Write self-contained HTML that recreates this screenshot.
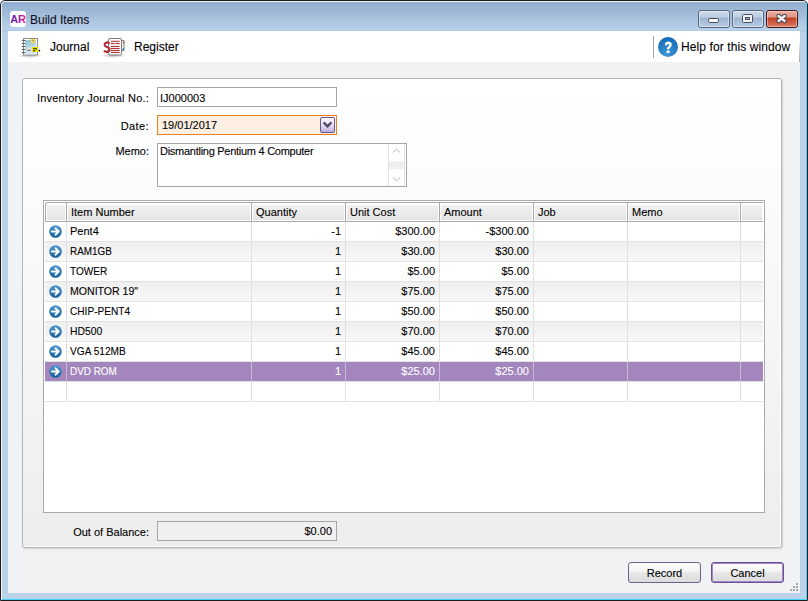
<!DOCTYPE html>
<html><head><meta charset="utf-8">
<style>
*{box-sizing:border-box;margin:0;padding:0}
html,body{width:808px;height:601px;overflow:hidden;background:#fff}
body{position:relative;font-family:"Liberation Sans",sans-serif;font-size:11px;color:#000;-webkit-text-stroke-width:0.1px}
.a{position:absolute}
#win{left:0;top:0;width:808px;height:601px;border:1px solid #1c1c1c;border-radius:5px 5px 0 0;
 background:linear-gradient(#92afd0 1px,#a0bad8 12px,#b9d1ea 29px,#a9c3df 30px,#bad2ea 31px,#bad2ea 100%);overflow:hidden}
#winin{left:0;top:0;width:806px;height:599px;border:1px solid rgba(255,255,255,.85);border-radius:4px 4px 0 0;border-bottom-color:#42d4fa;border-right-color:#42d4fa}
#title{left:30px;top:13px;font-size:12px;color:#101020}
#appic{left:10px;top:11px;width:17px;height:17px;background:#fff;border-radius:3px;font-weight:bold;font-size:11px;line-height:17px;text-align:center;letter-spacing:-0.5px}
#toolbar{left:8px;top:31px;width:792px;height:31px;background:#fff}
#content{left:8px;top:62px;width:792px;height:531px;background:#f1f2f4}
.tb{font-size:12px;top:40px}
#panel{left:22px;top:78px;width:760px;height:470px;border:1px solid #b4b4b4;border-radius:3px;
 background:linear-gradient(#fff 0,#fbfbfb 120px,#ededed 100%);box-shadow:inset -1px -1px 0 #fff,1px 1px 2px rgba(0,0,0,.13)}
.lbl{font-size:11px}
.inp{border:1px solid #a5a5a5;background:#fff}
.wbtn{top:10px;height:18px;border:1px solid #5a6f8e;border-radius:3px;
 background:linear-gradient(#cfdcec 0,#bccde3 45%,#9fb5d2 50%,#b4c8e2 100%);box-shadow:inset 0 0 0 1px rgba(255,255,255,.45)}
#grid{left:43px;top:200px;width:722px;height:313px;border:1px solid #aaaaaa;background:#fff}
.hd{position:absolute;top:202px;height:19px;border-top:1px solid #b8b8b8;border-bottom:2px solid #a8a8a8;
 background:linear-gradient(#fdfdfd 0,#f0f0f0 60%,#e3e3e3 100%);font-size:11px;padding:3px 0 0 4px}
.hsep{position:absolute;top:202px;height:19px;width:2px;border-left:1px solid #a8a8a8;background:#fff}
.hc{position:absolute;top:205px;height:15px;background:linear-gradient(#f1f1f1,#e4e4e4)}
.row{position:absolute;left:44px;width:719px;height:20px;border-bottom:1px solid #e4e4e4}
.alt{background:linear-gradient(#f3f3f3,#ededed)}
.vsep{position:absolute;top:221px;height:180px;width:1px;background:#e0e0e0}
.c{position:absolute;font-size:11px;white-space:nowrap}
.r{text-align:right}
.btn{top:562px;height:21px;width:73px;border:1px solid #6f5f8c;border-radius:3px;
 background:linear-gradient(#fdfdfd 0,#f3f3f3 45%,#e6e6e6 55%,#dcdcdc 100%);font-size:11px;text-align:center;line-height:21px}
</style></head><body>
<svg width="0" height="0" style="position:absolute"><defs>
<linearGradient id="ag" x1="0" y1="0" x2="0" y2="1"><stop offset="0" stop-color="#4d9ad2"/><stop offset="1" stop-color="#135c9a"/></linearGradient>
<symbol id="arw" viewBox="0 0 13 13"><circle cx="6.5" cy="6.5" r="6.3" fill="url(#ag)"/><path d="M2.8 6.5H9.6M6.5 3.3L9.8 6.5L6.5 9.7" stroke="#fff" stroke-width="1.9" fill="none" stroke-linecap="round" stroke-linejoin="round"/></symbol>
</defs></svg>
<div id="win" class="a"><div id="winin" class="a"></div></div>
<svg class="a" style="left:10px;top:11px" width="16" height="16" viewBox="0 0 16 16"><defs><linearGradient id="arg" x1="0" y1="0" x2="1" y2="0"><stop offset="0" stop-color="#5a18b4"/><stop offset="0.5" stop-color="#8a1cb0"/><stop offset="1" stop-color="#e8207a"/></linearGradient></defs><rect width="16" height="16" rx="3" fill="#fff"/><text x="8" y="12.2" text-anchor="middle" font-family="Liberation Sans" font-weight="bold" font-size="11" letter-spacing="-0.3" fill="url(#arg)">AR</text></svg>
<div id="title" class="a">Build Items</div>
<svg class="a" style="left:696px;top:8px" width="104" height="22" viewBox="0 0 104 22">
<defs>
<linearGradient id="bg1" x1="0" y1="0" x2="0" y2="1"><stop offset="0" stop-color="#cddbec"/><stop offset="0.4" stop-color="#bccde2"/><stop offset="0.43" stop-color="#9db4d0"/><stop offset="1" stop-color="#b9cde6"/></linearGradient>
<linearGradient id="bg2" x1="0" y1="0" x2="0" y2="1"><stop offset="0" stop-color="#eeb0a0"/><stop offset="0.4" stop-color="#dd9482"/><stop offset="0.43" stop-color="#bf3e22"/><stop offset="1" stop-color="#dc8068"/></linearGradient>
</defs>
<rect x="2.5" y="2.5" width="31" height="17" rx="2.5" fill="url(#bg1)" stroke="#56657c"/>
<rect x="3.5" y="3.5" width="29" height="15" rx="1.5" fill="none" stroke="#fff" stroke-opacity=".45"/>
<rect x="36.5" y="2.5" width="31" height="17" rx="2.5" fill="url(#bg1)" stroke="#56657c"/>
<rect x="37.5" y="3.5" width="29" height="15" rx="1.5" fill="none" stroke="#fff" stroke-opacity=".45"/>
<rect x="70.5" y="2.5" width="31" height="17" rx="2.5" fill="url(#bg2)" stroke="#4a1418"/>
<rect x="71.5" y="3.5" width="29" height="15" rx="1.5" fill="none" stroke="#fff" stroke-opacity=".4"/>
<rect x="12.5" y="10.5" width="10" height="4" rx="1.2" fill="#f4f4f4" stroke="#464e5c"/>
<rect x="46.5" y="6.5" width="10" height="8" rx="1.2" fill="#f4f4f4" stroke="#464e5c"/>
<rect x="49.5" y="9.5" width="4" height="2" fill="#a9bfd8" stroke="#464e5c"/>
<path d="M82.6 8L88.6 13M88.6 8L82.6 13" stroke="#3d4450" stroke-width="4.4" stroke-linecap="round"/>
<path d="M82.6 8L88.6 13M88.6 8L82.6 13" stroke="#f6f6f6" stroke-width="2.4" stroke-linecap="round"/>
</svg>
<div id="toolbar" class="a"></div>
<div id="content" class="a"></div>
<div class="a" style="left:799px;top:40px;width:1px;height:22px;background:linear-gradient(rgba(150,150,150,0),rgba(150,150,150,.9))"></div>

<svg class="a" style="left:15px;top:32px" width="30" height="28" viewBox="0 0 30 28">
<defs><radialGradient id="shd" cx="0.5" cy="0.5" r="0.5"><stop offset="0" stop-color="#000" stop-opacity=".28"/><stop offset="1" stop-color="#000" stop-opacity="0"/></radialGradient>
<linearGradient id="jb" x1="0" y1="0" x2="0.3" y2="1"><stop offset="0" stop-color="#8fc0d4"/><stop offset="1" stop-color="#d4ecf2"/></linearGradient></defs>
<ellipse cx="15" cy="23.5" rx="13" ry="2.6" fill="url(#shd)"/>
<rect x="8.5" y="6.5" width="14" height="16.5" fill="#fff" stroke="#8c8c8c"/>
<rect x="10" y="8" width="11" height="14" fill="url(#jb)"/>
<path d="M6.8 8.5h3.4M6.8 11.5h3.4M6.8 14.5h3.4M6.8 17.5h3.4M6.8 20.5h3.4" stroke="#5a5a5a" stroke-width="1.2"/>
<rect x="16" y="7" width="4" height="4" fill="#f2d83a"/>
<rect x="17" y="8" width="2" height="1.2" fill="#b8a860"/>
<rect x="12.5" y="15.5" width="5" height="4" fill="#e4e4e4"/>
<rect x="12.5" y="17.8" width="3" height="1" fill="#555"/>
<rect x="17" y="15" width="6" height="5" fill="#f4ea00"/>
<rect x="18" y="16.2" width="4" height="1.2" fill="#333"/>
<rect x="18" y="18.2" width="2.2" height="1.2" fill="#333"/>
<rect x="23" y="15.5" width="2" height="4" fill="#eeeeee"/>
<circle cx="24.3" cy="18.6" r="0.9" fill="#111"/>
</svg>
<svg class="a" style="left:98px;top:32px" width="32" height="28" viewBox="0 0 32 28">
<ellipse cx="15.5" cy="23.5" rx="13" ry="2.6" fill="url(#shd)"/>
<path d="M23.5 8.5h2.5v10h-2.5" fill="#fff" stroke="#7a7a7a"/>
<rect x="10.5" y="6.5" width="13" height="16.5" rx="1.5" fill="#fff" stroke="#7a7a7a"/>
<rect x="12" y="8.5" width="10" height="13" fill="#ececec"/>
<circle cx="25.6" cy="10.5" r="0.8" fill="#d02020"/>
<circle cx="25" cy="14" r="0.8" fill="#9fd08a"/>
<circle cx="25.3" cy="17" r="0.9" fill="#2080e0"/>
<path d="M13 9.3h8.5M13 11.5h3.5M17.5 11.5h4M13 14.5h8.5M13 16.5h8.5M13 18.5h8.5M13 20.5h8.5" stroke="#b33038" stroke-width="1"/>
<path d="M11.6 11.6C10.6 10.4 6.6 10.2 6.6 12.9C6.6 15.4 11.6 14.6 11.6 17.4C11.6 20.2 7.2 20.2 6 18.6M9 9.2v2M9 19.4v1.6" stroke="#b52e36" stroke-width="2.1" fill="none"/>
</svg>
<div class="a tb" style="left:50px">Journal</div>
<div class="a tb" style="left:134px">Register</div>
<div class="a" style="left:653px;top:36px;width:1px;height:22px;background:#a4a4a4"></div>
<svg class="a" style="left:658px;top:37px" width="20" height="20" viewBox="0 0 20 20"><defs><radialGradient id="hg" cx="0.45" cy="0.85" r="0.9"><stop offset="0" stop-color="#4399d4"/><stop offset="1" stop-color="#0c66b4"/></radialGradient></defs><circle cx="10" cy="10" r="10" fill="url(#hg)"/><path d="M8 8.2C8 5.1 12.6 5 12.6 7.8C12.6 9.8 10.1 10 10.1 12.3" stroke="#fff" stroke-width="2.4" fill="none"/><rect x="8.6" y="13.6" width="3" height="2.5" rx="0.6" fill="#fff"/></svg>
<div class="a tb" style="left:681px;letter-spacing:0.1px">Help for this window</div>

<div id="panel" class="a"></div>
<div class="a lbl r" style="left:0;width:149px;top:92px;letter-spacing:0.2px">Inventory Journal No.:</div>
<div class="a inp" style="left:157px;top:87px;width:180px;height:20px"></div>
<div class="a lbl" style="left:160px;top:92px">IJ000003</div>
<div class="a lbl r" style="left:0;width:149px;top:120px;letter-spacing:0.4px">Date:</div>
<div class="a inp" style="left:157px;top:115px;width:180px;height:20px;border-color:#e8821e;background:#fdefe2"></div>
<div class="a lbl" style="left:162px;top:119px">19/01/2017</div>
<div class="a" style="left:320px;top:117px;width:15px;height:16px;border:1px solid #6a5690;border-radius:2px;background:linear-gradient(#fcfbff 0,#e4def0 50%,#bfb1da 100%)"></div>
<svg class="a" style="left:320px;top:117px" width="15" height="16"><path d="M3.6 5.4L7.5 9.3L11.4 5.4" stroke="#54446e" stroke-width="2.3" fill="none"/></svg>
<div class="a lbl r" style="left:0;width:149px;top:145px">Memo:</div>
<div class="a inp" style="left:157px;top:143px;width:250px;height:44px"></div>
<svg class="a" style="left:388px;top:144px" width="18" height="42"><path d="M0.5 0V42M16.5 0V42" stroke="#dfe2e7" stroke-width="1"/><rect x="1" y="17" width="15" height="8" fill="#eeeff1"/><path d="M5 8.5L8.5 5L12 8.5M5 33.5L8.5 37L12 33.5" stroke="#cfd3d9" stroke-width="1.1" fill="none"/></svg>
<div class="a lbl" style="left:160px;top:145px;letter-spacing:-0.27px">Dismantling Pentium 4 Computer</div>

<div id="grid" class="a"></div>
<!--TABLE-->
<div class="a" style="left:45px;top:202px;width:718px;height:20px;border:1px solid #a9a9a9;border-right:none;border-radius:3px 0 0 0;background:#fff"></div>
<div class="a hc" style="left:47px;width:18px"></div>
<div class="a hc" style="left:68px;width:182px"></div>
<div class="a c" style="left:71px;top:206px">Item Number</div>
<div class="a hc" style="left:253px;width:91px"></div>
<div class="a c" style="left:256px;top:206px">Quantity</div>
<div class="a hc" style="left:347px;width:91px"></div>
<div class="a c" style="left:350px;top:206px">Unit Cost</div>
<div class="a hc" style="left:441px;width:91px"></div>
<div class="a c" style="left:444px;top:206px">Amount</div>
<div class="a hc" style="left:535px;width:91px"></div>
<div class="a c" style="left:538px;top:206px">Job</div>
<div class="a hc" style="left:629px;width:110px"></div>
<div class="a c" style="left:632px;top:206px">Memo</div>
<div class="a hc" style="left:742px;width:20px"></div>
<div class="a" style="left:66px;top:203px;width:1px;height:18px;background:#a9a9a9"></div>
<div class="a" style="left:251px;top:203px;width:1px;height:18px;background:#a9a9a9"></div>
<div class="a" style="left:345px;top:203px;width:1px;height:18px;background:#a9a9a9"></div>
<div class="a" style="left:439px;top:203px;width:1px;height:18px;background:#a9a9a9"></div>
<div class="a" style="left:533px;top:203px;width:1px;height:18px;background:#a9a9a9"></div>
<div class="a" style="left:627px;top:203px;width:1px;height:18px;background:#a9a9a9"></div>
<div class="a" style="left:740px;top:203px;width:1px;height:18px;background:#a9a9a9"></div>
<div class="a" style="left:45px;top:222px;width:718px;height:19px;"></div>
<div class="a" style="left:45px;top:241px;width:718px;height:1px;background:#e2e2e2"></div>
<div class="a" style="left:45px;top:242px;width:718px;height:19px;background:linear-gradient(#efefef,#f8f8f8);"></div>
<div class="a" style="left:45px;top:261px;width:718px;height:1px;background:#e2e2e2"></div>
<div class="a" style="left:45px;top:262px;width:718px;height:19px;"></div>
<div class="a" style="left:45px;top:281px;width:718px;height:1px;background:#e2e2e2"></div>
<div class="a" style="left:45px;top:282px;width:718px;height:19px;background:linear-gradient(#efefef,#f8f8f8);"></div>
<div class="a" style="left:45px;top:301px;width:718px;height:1px;background:#e2e2e2"></div>
<div class="a" style="left:45px;top:302px;width:718px;height:19px;"></div>
<div class="a" style="left:45px;top:321px;width:718px;height:1px;background:#e2e2e2"></div>
<div class="a" style="left:45px;top:322px;width:718px;height:19px;background:linear-gradient(#efefef,#f8f8f8);"></div>
<div class="a" style="left:45px;top:341px;width:718px;height:1px;background:#e2e2e2"></div>
<div class="a" style="left:45px;top:342px;width:718px;height:19px;"></div>
<div class="a" style="left:45px;top:361px;width:718px;height:1px;background:#e2e2e2"></div>
<div class="a" style="left:45px;top:362px;width:718px;height:19px;background:#a386be;"></div>
<div class="a" style="left:45px;top:381px;width:718px;height:1px;background:#e2e2e2"></div>
<div class="a" style="left:45px;top:382px;width:718px;height:19px;"></div>
<div class="a" style="left:45px;top:401px;width:718px;height:1px;background:#e2e2e2"></div>
<div class="a" style="left:66px;top:222px;width:1px;height:180px;background:#e0e0e0"></div>
<div class="a" style="left:251px;top:222px;width:1px;height:180px;background:#e0e0e0"></div>
<div class="a" style="left:345px;top:222px;width:1px;height:180px;background:#e0e0e0"></div>
<div class="a" style="left:439px;top:222px;width:1px;height:180px;background:#e0e0e0"></div>
<div class="a" style="left:533px;top:222px;width:1px;height:180px;background:#e0e0e0"></div>
<div class="a" style="left:627px;top:222px;width:1px;height:180px;background:#e0e0e0"></div>
<div class="a" style="left:740px;top:222px;width:1px;height:180px;background:#e0e0e0"></div>
<div class="a" style="left:66px;top:362px;width:1px;height:19px;background:#c8b8d8"></div>
<div class="a" style="left:251px;top:362px;width:1px;height:19px;background:#c8b8d8"></div>
<div class="a" style="left:345px;top:362px;width:1px;height:19px;background:#c8b8d8"></div>
<div class="a" style="left:439px;top:362px;width:1px;height:19px;background:#c8b8d8"></div>
<div class="a" style="left:533px;top:362px;width:1px;height:19px;background:#c8b8d8"></div>
<div class="a" style="left:627px;top:362px;width:1px;height:19px;background:#c8b8d8"></div>
<div class="a" style="left:740px;top:362px;width:1px;height:19px;background:#c8b8d8"></div>
<svg class="a" style="left:49px;top:225px" width="13" height="13"><use href="#arw"/></svg>
<div class="a c" style="left:70px;top:225px;">Pent4</div>
<div class="a c r" style="left:252px;width:89px;top:225px;">-1</div>
<div class="a c r" style="left:346px;width:89px;top:225px;">$300.00</div>
<div class="a c r" style="left:440px;width:89px;top:225px;">-$300.00</div>
<svg class="a" style="left:49px;top:245px" width="13" height="13"><use href="#arw"/></svg>
<div class="a c" style="left:70px;top:245px;transform:scaleX(0.9);transform-origin:0 0;">RAM1GB</div>
<div class="a c r" style="left:252px;width:89px;top:245px;">1</div>
<div class="a c r" style="left:346px;width:89px;top:245px;">$30.00</div>
<div class="a c r" style="left:440px;width:89px;top:245px;">$30.00</div>
<svg class="a" style="left:49px;top:265px" width="13" height="13"><use href="#arw"/></svg>
<div class="a c" style="left:70px;top:265px;transform:scaleX(0.915);transform-origin:0 0;">TOWER</div>
<div class="a c r" style="left:252px;width:89px;top:265px;">1</div>
<div class="a c r" style="left:346px;width:89px;top:265px;">$5.00</div>
<div class="a c r" style="left:440px;width:89px;top:265px;">$5.00</div>
<svg class="a" style="left:49px;top:285px" width="13" height="13"><use href="#arw"/></svg>
<div class="a c" style="left:70px;top:285px;transform:scaleX(0.96);transform-origin:0 0;">MONITOR 19"</div>
<div class="a c r" style="left:252px;width:89px;top:285px;">1</div>
<div class="a c r" style="left:346px;width:89px;top:285px;">$75.00</div>
<div class="a c r" style="left:440px;width:89px;top:285px;">$75.00</div>
<svg class="a" style="left:49px;top:305px" width="13" height="13"><use href="#arw"/></svg>
<div class="a c" style="left:70px;top:305px;transform:scaleX(0.918);transform-origin:0 0;">CHIP-PENT4</div>
<div class="a c r" style="left:252px;width:89px;top:305px;">1</div>
<div class="a c r" style="left:346px;width:89px;top:305px;">$50.00</div>
<div class="a c r" style="left:440px;width:89px;top:305px;">$50.00</div>
<svg class="a" style="left:49px;top:325px" width="13" height="13"><use href="#arw"/></svg>
<div class="a c" style="left:70px;top:325px;transform:scaleX(0.94);transform-origin:0 0;">HD500</div>
<div class="a c r" style="left:252px;width:89px;top:325px;">1</div>
<div class="a c r" style="left:346px;width:89px;top:325px;">$70.00</div>
<div class="a c r" style="left:440px;width:89px;top:325px;">$70.00</div>
<svg class="a" style="left:49px;top:345px" width="13" height="13"><use href="#arw"/></svg>
<div class="a c" style="left:70px;top:345px;transform:scaleX(0.921);transform-origin:0 0;">VGA 512MB</div>
<div class="a c r" style="left:252px;width:89px;top:345px;">1</div>
<div class="a c r" style="left:346px;width:89px;top:345px;">$45.00</div>
<div class="a c r" style="left:440px;width:89px;top:345px;">$45.00</div>
<svg class="a" style="left:49px;top:365px" width="13" height="13"><use href="#arw"/></svg>
<div class="a c" style="left:70px;top:365px; color:#fff;transform:scaleX(0.9);transform-origin:0 0;">DVD ROM</div>
<div class="a c r" style="left:252px;width:89px;top:365px; color:#fff;">1</div>
<div class="a c r" style="left:346px;width:89px;top:365px; color:#fff;">$25.00</div>
<div class="a c r" style="left:440px;width:89px;top:365px; color:#fff;">$25.00</div>
<!--/TABLE-->

<div class="a lbl r" style="left:0;width:149px;top:526px">Out of Balance:</div>
<div class="a inp" style="left:157px;top:521px;width:180px;height:20px;background:#f0f0f0"></div>
<div class="a lbl r" style="left:157px;top:525px;width:175px">$0.00</div>

<div class="a btn" style="left:628px">Record</div>
<div class="a btn" style="left:711px;width:73px;border:1px solid #6a5090;box-shadow:inset 0 0 0 1px #a486cc;line-height:21px">Cancel</div>
<div class="a" style="left:796px;top:583px;width:2px;height:2px;background:#a3a9b2"></div><div class="a" style="left:793px;top:586px;width:2px;height:2px;background:#a3a9b2"></div><div class="a" style="left:796px;top:586px;width:2px;height:2px;background:#a3a9b2"></div><div class="a" style="left:790px;top:589px;width:2px;height:2px;background:#a3a9b2"></div><div class="a" style="left:793px;top:589px;width:2px;height:2px;background:#a3a9b2"></div><div class="a" style="left:796px;top:589px;width:2px;height:2px;background:#a3a9b2"></div>
</body></html>
